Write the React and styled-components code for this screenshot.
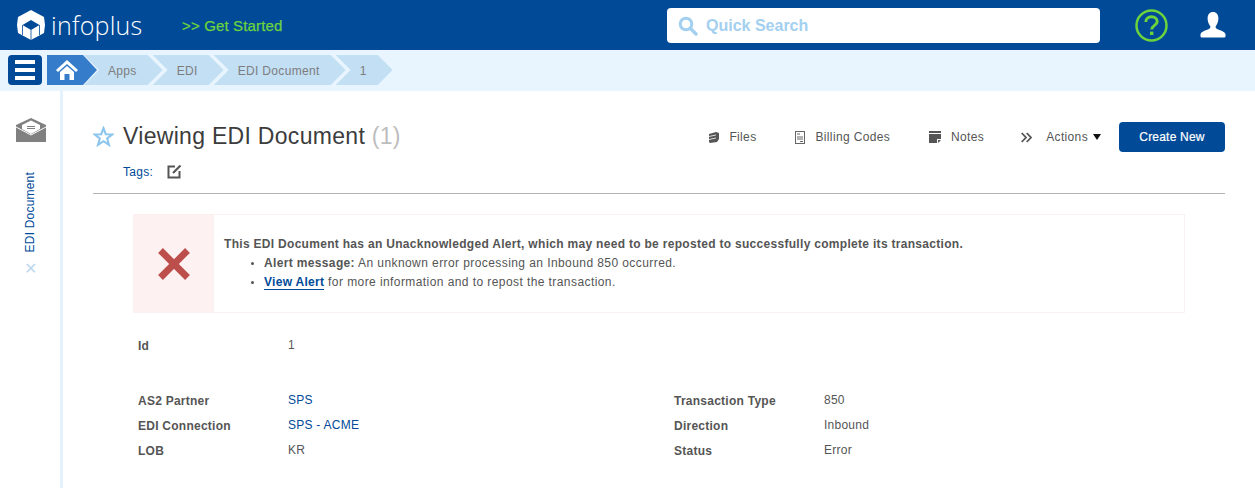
import styled, { createGlobalStyle } from 'styled-components';

const Global = createGlobalStyle`
  html, body { margin: 0; padding: 0; background: #fff; }
  body { font-family: "Liberation Sans", Arial, sans-serif; color: #555; overflow: hidden; }
  * { box-sizing: border-box; }
`;

const blue = '#004a98';
const crumbs = ['Apps', 'EDI', 'EDI Document', '1'];

const left = [
  { label: 'AS2 Partner', value: 'SPS', link: true },
  { label: 'EDI Connection', value: 'SPS - ACME', link: true },
  { label: 'LOB', value: 'KR' },
];
const right = [
  { label: 'Transaction Type', value: '850' },
  { label: 'Direction', value: 'Inbound' },
  { label: 'Status', value: 'Error' },
];

const Logo = () => (
  <svg width="28" height="30" viewBox="0 0 28 30">
    <path fill="#fff" d="M14 0 L27 7 L28 15 L27 23 L14 30 L1 23 L0 15 L1 7 Z" />
    <path fill={blue} d="M5.5 15 L14 10 L22.5 15 L14 20 Z" />
    <path stroke={blue} strokeWidth="0.8" d="M14 20 V30 M5.5 15 L5.5 25 M22.5 15 L22.5 25" />
  </svg>
);

const App = () => (
  <Page>
    <Global />
    <Header>
      <Brand>
        <Logo />
        <BrandName>infoplus</BrandName>
      </Brand>
      <GetStarted>&gt;&gt; Get Started</GetStarted>
      <Search>
        <svg width="20" height="20" viewBox="0 0 20 20">
          <circle cx="8" cy="8" r="5.8" fill="none" stroke="#a3d0f0" strokeWidth="3" />
          <path d="M12.5 12.5 L18 18" stroke="#a3d0f0" strokeWidth="3.4" strokeLinecap="round" />
        </svg>
        <SearchText>Quick Search</SearchText>
      </Search>
      <HelpIcon>
        <svg width="33" height="33" viewBox="0 0 33 33">
          <circle cx="16.5" cy="16.5" r="15" fill="none" stroke="#6cd33d" strokeWidth="2.5" />
          <path fill="none" stroke="#6cd33d" strokeWidth="3" d="M10.8 13 C10.8 9.5 13.5 7.8 16.5 7.8 C19.7 7.8 22.2 9.6 22.2 12.7 C22.2 16.4 16.7 16.4 16.7 20.6" />
          <rect x="15" y="22.6" width="3.4" height="3.4" fill="#6cd33d" />
        </svg>
      </HelpIcon>
      <UserIcon>
        <svg width="26" height="26" viewBox="0 0 26 26">
          <path fill="#fff" d="M13 0 C16.4 0 18.4 2.6 18.4 6.5 C18.4 9.6 17.2 12.4 15.9 14 C15.2 15 15.6 16.2 17 16.9 C20.2 18.3 24.6 19.3 25.5 22 L25.5 24.6 Q25.5 25.6 24 25.6 L2 25.6 Q0.5 25.6 0.5 24.6 L0.5 22 C1.4 19.3 5.8 18.3 9 16.9 C10.4 16.2 10.8 15 10.1 14 C8.8 12.4 7.6 9.6 7.6 6.5 C7.6 2.6 9.6 0 13 0 Z" />
        </svg>
      </UserIcon>
    </Header>
    <Crumbs>
      <MenuButton>
        <MenuLine /><MenuLine /><MenuLine />
      </MenuButton>
      <HomeCrumb>
        <svg width="24" height="22" viewBox="0 0 24 22">
          <path fill="#fff" d="M12 1 L23 11 L21 13 L12 5 L3 13 L1 11 Z M5 13 L12 7 L19 13 L19 21 L14.5 21 L14.5 15 L9.5 15 L9.5 21 L5 21 Z" />
        </svg>
      </HomeCrumb>
      {crumbs.map(c => <Crumb key={c}>{c}</Crumb>)}
    </Crumbs>
    <Body>
      <Side>
        <Envelope>
          <svg width="30" height="25" viewBox="0 0 30 25">
            <path fill="#808080" d="M15 0 L30 7 L30 24 L0 24 L0 7 Z" />
            <path fill="#fff" d="M6 7 L15 2.5 L24 7 L24 11 L15 16 L6 11 Z" />
            <path d="M11 8.5 H19 M11 10.5 H19" stroke="#808080" strokeWidth="1" />
            <path d="M0 9 L15 17 L30 9" stroke="#fff" strokeWidth="1" fill="none" />
          </svg>
        </Envelope>
        <SideTab>EDI Document</SideTab>
        <SideClose>✕</SideClose>
      </Side>
      <Main>
        <TitleRow>
          <TitleBlock>
            <TitleLine>
              <svg width="21" height="21" viewBox="0 0 24 24">
                <path fill="none" stroke="#8cc5ee" strokeWidth="2.4" d="M12 2.5 L14.6 9.4 L22 9.7 L16.2 14.3 L18.2 21.5 L12 17.4 L5.8 21.5 L7.8 14.3 L2 9.7 L9.4 9.4 Z" />
              </svg>
              <Title>Viewing EDI Document <TitleId>(1)</TitleId></Title>
            </TitleLine>
            <TagRow>
              <TagLabel>Tags:</TagLabel>
              <svg width="15" height="15" viewBox="0 0 15 15">
                <path fill="none" stroke="#555" strokeWidth="2" d="M8 2.5 H1.5 V13.5 H12.5 V7" />
                <path stroke="#555" strokeWidth="2.2" d="M6 9 L13.5 1.5" />
              </svg>
            </TagRow>
          </TitleBlock>
          <Toolbar>
            <ToolItem>
              <svg width="10" height="12" viewBox="0 0 10 12">
                <path fill="#555" d="M0 3 L7 1 L10 2 V8 L8 11 L1 12 L0 11 Z" />
                <path stroke="#fff" strokeWidth="0.8" d="M0 5.5 L7 4 M0 8.5 L7 7" />
              </svg>
              <span>Files</span>
            </ToolItem>
            <ToolItem>
              <svg width="10" height="13" viewBox="0 0 10 13">
                <rect x="0.5" y="0.5" width="9" height="12" fill="#fff" stroke="#666" />
                <path stroke="#666" d="M2 3 H5 M2 6 H8 M2 8 H8 M5 10.5 H8" />
              </svg>
              <span>Billing Codes</span>
            </ToolItem>
            <NotesItem>
              <svg width="12" height="12" viewBox="0 0 12 12">
                <path fill="#555" d="M0 0 H12 V2 H0 Z M0 3 H12 V8 H8 V12 H0 Z M9 9 H12 L9 12 Z" />
              </svg>
              <span>Notes</span>
            </NotesItem>
            <ActionsItem>
              <svg width="11" height="11" viewBox="0 0 11 11">
                <path fill="none" stroke="#555" strokeWidth="1.8" d="M0.7 1 L5 5.5 L0.7 10 M5.7 1 L10 5.5 L5.7 10" />
              </svg>
              <span>Actions</span>
              <Caret />
            </ActionsItem>
            <CreateButton>Create New</CreateButton>
          </Toolbar>
        </TitleRow>
        <Alert>
          <AlertIcon>
            <svg width="34" height="34" viewBox="0 0 34 34">
              <path d="M3.5 3.5 L30.5 30.5 M30.5 3.5 L3.5 30.5" stroke="#bc4f4c" strokeWidth="6.8" />
            </svg>
          </AlertIcon>
          <AlertBody>
            <AlertTitle>This EDI Document has an Unacknowledged Alert, which may need to be reposted to successfully complete its transaction.</AlertTitle>
            <AlertList>
              <li><b>Alert message:</b> An unknown error processing an Inbound 850 occurred.</li>
              <li><AlertLink>View Alert</AlertLink> for more information and to repost the transaction.</li>
            </AlertList>
          </AlertBody>
        </Alert>
        <IdRow>
          <Label>Id</Label>
          <Value>1</Value>
        </IdRow>
        <Fields>
          <FieldCol>
            {left.map(f => (
              <Field key={f.label}>
                <Label>{f.label}</Label>
                <Value $link={f.link}>{f.value}</Value>
              </Field>
            ))}
          </FieldCol>
          <FieldCol>
            {right.map(f => (
              <Field key={f.label}>
                <Label>{f.label}</Label>
                <Value>{f.value}</Value>
              </Field>
            ))}
          </FieldCol>
        </Fields>
      </Main>
    </Body>
  </Page>
);

export default App;

const Page = styled.div`
  width: 1255px;
  height: 488px;
  overflow: hidden;
  display: flex;
  flex-direction: column;
`;

const Header = styled.header`
  height: 50px;
  background: ${blue};
  display: flex;
  align-items: center;
  padding-left: 17px;
`;

const Brand = styled.div`
  display: flex;
  align-items: center;
  gap: 6px;
  width: 165px;
`;

const BrandName = styled.span`
  font-family: "Open Sans", sans-serif;
  font-size: 25px;
  font-weight: 300;
  letter-spacing: 0.25px;
  color: #fff;
`;

const GetStarted = styled.span`
  width: 485px;
  font-size: 15px;
  letter-spacing: 0.15px;
  color: #6cd33d;
  -webkit-text-stroke: 0.25px #6cd33d;
`;

const Search = styled.div`
  width: 433px;
  height: 35px;
  margin-top: 1px;
  background: #fff;
  border-radius: 4px;
  display: flex;
  align-items: center;
  gap: 8px;
  padding-left: 11px;
`;

const SearchText = styled.span`
  margin-top: 1px;
  font-size: 16px;
  font-weight: 700;
  color: #a3d0f0;
`;

const HelpIcon = styled.div`
  margin-left: 35px;
  display: flex;
`;

const UserIcon = styled.div`
  margin-left: 32px;
  display: flex;
`;

const Crumbs = styled.nav`
  height: 41px;
  background: #e9f5fe;
  display: flex;
  align-items: center;
  padding-left: 8px;
  padding-bottom: 1px;
`;

const MenuButton = styled.div`
  width: 34px;
  height: 30px;
  margin-right: 5px;
  border-radius: 4px;
  background: ${blue};
  display: flex;
  flex-direction: column;
  justify-content: center;
  align-items: center;
  gap: 4px;
`;

const MenuLine = styled.span`
  width: 20px;
  height: 4px;
  background: #fff;
`;

const HomeCrumb = styled.div`
  width: 50px;
  height: 30px;
  margin-right: -13px;
  padding-left: 8px;
  display: flex;
  align-items: center;
  background: #357ccb;
  clip-path: polygon(0 0, 36px 0, 50px 15px, 36px 30px, 0 30px);
  position: relative;
  z-index: 1;
`;

const Crumb = styled.div`
  height: 30px;
  margin-right: -10px;
  padding: 2px 26px 0 24px;
  display: flex;
  align-items: center;
  font-size: 12px;
  letter-spacing: 0.33px;
  color: #7d7d7d;
  background: #c2dff4;
  clip-path: polygon(0 0, calc(100% - 15px) 0, 100% 15px, calc(100% - 15px) 30px, 0 30px, 15px 15px);
`;

const Body = styled.div`
  flex: 1;
  display: flex;
`;

const Side = styled.aside`
  width: 63px;
  flex-shrink: 0;
  border-right: 3px solid #e4f2fd;
  padding-top: 27px;
  display: flex;
  flex-direction: column;
  align-items: center;
`;

const Envelope = styled.div`
  display: flex;
  margin-left: 2px;
`;

const SideTab = styled.div`
  margin-top: 29px;
  writing-mode: vertical-rl;
  transform: rotate(180deg);
  font-size: 12px;
  letter-spacing: 0.2px;
  color: ${blue};
`;

const SideClose = styled.div`
  margin-top: 7px;
  font-size: 16px;
  color: #bcd9ef;
`;

const Main = styled.main`
  flex: 1;
  padding: 31px 30px 0 30px;
`;

const TitleRow = styled.div`
  display: flex;
  justify-content: space-between;
  align-items: flex-start;
  height: 72px;
  border-bottom: 1px solid #b3b3b3;
`;

const TitleBlock = styled.div`
  display: flex;
  flex-direction: column;
  padding-top: 1px;
`;

const TitleLine = styled.div`
  display: flex;
  align-items: center;
  gap: 9px;
`;

const Title = styled.h1`
  margin: 0;
  font-size: 23px;
  font-weight: 400;
  letter-spacing: 0.3px;
  color: #3c3c3c;
`;

const TitleId = styled.span`
  color: #bdbdbd;
`;

const TagRow = styled.div`
  display: flex;
  align-items: center;
  gap: 14px;
  margin: 14px 0 0 30px;
`;

const TagLabel = styled.span`
  font-size: 12px;
  letter-spacing: 0.3px;
  color: ${blue};
`;

const Toolbar = styled.div`
  display: flex;
  align-items: center;
`;

const ToolItem = styled.div`
  display: flex;
  align-items: center;
  gap: 10px;
  margin-right: 39px;
  font-size: 12px;
  letter-spacing: 0.35px;
  color: #555;
  span { margin-top: -1px; }
`;

const NotesItem = styled(ToolItem)`
  margin-right: 37px;
`;

const ActionsItem = styled(ToolItem)`
  margin-right: 18px;
  gap: 0;
  span { margin: -1px 5px 0 14px; }
`;

const Caret = styled.span`
  width: 0;
  height: 0;
  border-left: 4px solid transparent;
  border-right: 4px solid transparent;
  border-top: 6px solid #111;
  && { margin: 0; }
`;

const CreateButton = styled.button`
  width: 106px;
  height: 30px;
  padding: 0 0 1px;
  border: 0;
  border-radius: 4px;
  background: ${blue};
  color: #fff;
  font-family: inherit;
  font-size: 12px;
  letter-spacing: 0.2px;
  -webkit-text-stroke: 0.2px #fff;
`;

const Alert = styled.section`
  margin: 20px 40px 0 40px;
  height: 99px;
  border: 1px solid #fdf0f1;
  display: flex;
  align-items: stretch;
`;

const AlertIcon = styled.div`
  width: 80px;
  background: #fdf2f1;
  display: flex;
  align-items: center;
  justify-content: center;
`;

const AlertBody = styled.div`
  padding: 20px 0 0 10px;
  font-size: 12px;
  line-height: 19px;
  letter-spacing: 0.3px;
  color: #555;
`;

const AlertTitle = styled.div`
  font-weight: 700;
`;

const AlertList = styled.ul`
  margin: 0;
  padding: 0 0 0 40px;
  letter-spacing: 0.42px;
  li::marker { font-size: 10px; }
  b { letter-spacing: 0.35px; }
`;

const AlertLink = styled.a`
  font-weight: 700;
  letter-spacing: 0.3px;
  color: ${blue};
  border-bottom: 1px solid ${blue};
`;

const IdRow = styled.div`
  display: flex;
  align-items: center;
  margin: 26px 0 0 45px;
`;

const Fields = styled.div`
  display: flex;
  margin: 40px 0 0 45px;
`;

const FieldCol = styled.div`
  width: 536px;
  display: flex;
  flex-direction: column;
  gap: 10px;
`;

const Field = styled.div`
  display: flex;
  align-items: center;
  height: 15px;
`;

const Label = styled.div`
  width: 150px;
  font-size: 12px;
  font-weight: 700;
  letter-spacing: 0.25px;
  color: #555;
`;

const Value = styled.div`
  font-size: 12px;
  letter-spacing: 0.25px;
  color: ${p => (p.$link ? blue : '#555')};
  margin-top: -2px;
`;
